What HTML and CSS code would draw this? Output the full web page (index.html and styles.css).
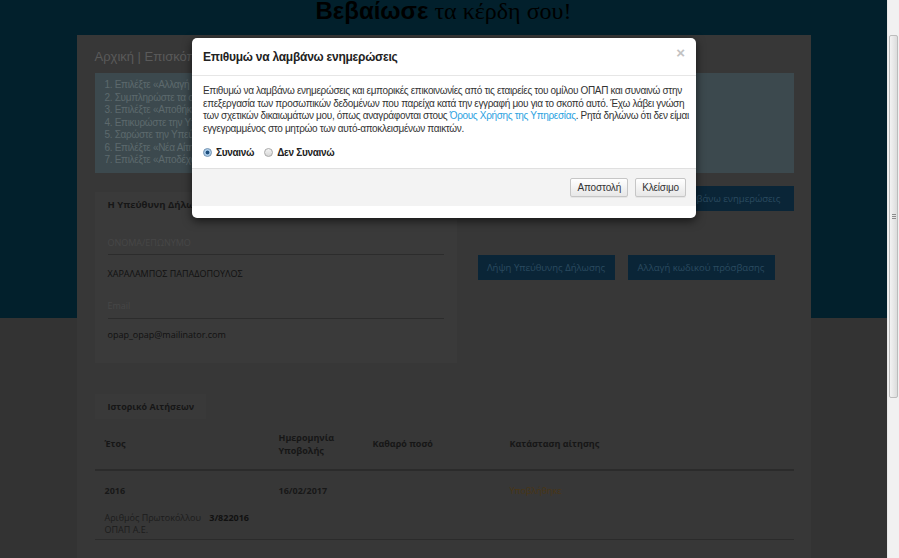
FILE: index.html
```html
<!DOCTYPE html>
<html lang="el">
<head>
<meta charset="utf-8">
<title>Βεβαίωσε τα κέρδη σου!</title>
<link rel="stylesheet" href="styles.css">
</head>
<body>
<div class="window">
  <div class="viewport">
    <h1 class="hero-title"><b>Βεβαίωσε</b> τα κέρδη σου!</h1>
    <div class="panel">
      <div class="crumbs">Αρχική | Επισκόπηση</div>
      <div class="steps">
        <div>1. Επιλέξτε «Αλλαγή στοιχείων»</div>
        <div>2. Συμπληρώστε τα στοιχεία σας</div>
        <div>3. Επιλέξτε «Αποθήκευση»</div>
        <div>4. Επικυρώστε την Υπεύθυνη Δήλωση</div>
        <div>5. Σαρώστε την Υπεύθυνη Δήλωση</div>
        <div>6. Επιλέξτε «Νέα Αίτηση»</div>
        <div>7. Επιλέξτε «Αποδέχομαι»</div>
      </div>
      <div class="info-row">
        <div class="card">
          <div class="card-title">Η Υπεύθυνη Δήλωση</div>
          <div class="field-label">ΟΝΟΜΑ/ΕΠΩΝΥΜΟ</div>
          <div class="field-value">ΧΑΡΑΛΑΜΠΟΣ ΠΑΠΑΔΟΠΟΥΛΟΣ</div>
          <div class="field-label second">Email</div>
          <div class="field-value second">opap_opap@mailinator.com</div>
        </div>
        <div class="actions">
          <div class="actions-top"><span class="btn-dark btn-wide">Επιθυμώ να λαμβάνω ενημερώσεις</span></div>
          <div class="actions-mid">
            <span class="btn-dark btn-a">Λήψη Υπεύθυνης Δήλωσης</span>
            <span class="btn-dark btn-b">Αλλαγή κωδικού πρόσβασης</span>
          </div>
        </div>
      </div>
      <div class="history">
        <div class="tab">Ιστορικό Αιτήσεων</div>
        <div class="table">
          <div class="thead">
            <div>Έτος</div>
            <div>Ημερομηνία<br>Υποβολής</div>
            <div>Καθαρό ποσό</div>
            <div>Κατάσταση αίτησης</div>
          </div>
          <div class="trow">
            <div class="cells">
              <div class="strong">2016</div>
              <div class="strong">16/02/2017</div>
              <div></div>
              <div class="status">Υποβλήθηκε</div>
            </div>
            <div class="proto">Αριθμός Πρωτοκόλλου <b>3/822016</b><br>ΟΠΑΠ Α.Ε.</div>
          </div>
        </div>
      </div>
    </div>

    <div class="modal">
      <div class="modal-header">
        <span class="modal-title">Επιθυμώ να λαμβάνω ενημερώσεις</span>
        <span class="close">×</span>
      </div>
      <div class="modal-body">
        <p class="consent">Επιθυμώ να λαμβάνω ενημερώσεις και εμπορικές επικοινωνίες από τις εταιρείες του ομίλου ΟΠΑΠ και συναινώ στην<br>επεξεργασία των προσωπικών δεδομένων που παρείχα κατά την εγγραφή μου για το σκοπό αυτό. Έχω λάβει γνώση<br>των σχετικών δικαιωμάτων μου, όπως αναγράφονται στους <a class="link" href="#">Όρους Χρήσης της Υπηρεσίας</a>. Ρητά δηλώνω ότι δεν είμαι<br>εγγεγραμμένος στο μητρώο των αυτό-αποκλεισμένων παικτών.</p>
        <div class="choices">
          <label class="choice"><input type="radio" name="c" checked> Συναινώ</label>
          <label class="choice"><input type="radio" name="c"> Δεν Συναινώ</label>
        </div>
      </div>
      <div class="modal-footer">
        <button class="btn-light">Αποστολή</button>
        <button class="btn-light">Κλείσιμο</button>
      </div>
    </div>
  </div>
  <div class="scrollbar"><div class="thumb"><span class="grip"></span></div></div>
</div>
</body>
</html>
```

FILE: styles.css
```css
html, body {
  margin: 0;
  padding: 0;
}
body {
  font-family: "Liberation Sans", Arial, sans-serif;
  overflow: hidden;
  background: #333333;
}
.window {
  display: flex;
  width: 899px;
  height: 558px;
}
.viewport {
  position: relative;
  flex: 1;
  height: 558px;
  overflow: hidden;
  background: linear-gradient(#02202c 0, #02202c 318px, #333333 318px);
}
.hero-title {
  margin: -3px 0 6px;
  height: 32px;
  line-height: 27px;
  text-align: center;
  font-size: 24px;
  font-weight: normal;
  color: #000;
  font-family: "Liberation Serif", serif;
}
.hero-title b {
  font-family: "Liberation Sans", Arial, sans-serif;
  font-weight: bold;
}
.panel {
  width: 734px;
  margin: 0 auto;
  background: #373737;
  padding: 0 17px 40px 18px;
  box-sizing: border-box;
  min-height: 540px;
}
.crumbs {
  height: 38px;
  padding-top: 12px;
  line-height: 20px;
  font-size: 13px;
  color: #5a5a5a;
  box-sizing: border-box;
}
.steps {
  background: #3c494e;
  padding: 6px 10px;
  font-size: 10px;
  letter-spacing: -0.3px;
  line-height: 12.5px;
  color: #5d696d;
}
.info-row {
  display: flex;
  margin-top: 13px;
}
.card {
  width: 362px;
  margin-top: 6px;
  background: #3a3a3a;
  padding: 6px 13px 0;
  font-family: "Open Sans", sans-serif;
  font-size: 9px;
  box-sizing: border-box;
  height: 171px;
}
.card-title {
  font-weight: bold;
  font-size: 9.5px;
  color: #161616;
  line-height: 13px;
  margin-bottom: 25px;
}
.field-label {
  color: #474747;
  line-height: 13px;
  padding-bottom: 5px;
  border-bottom: 1px solid #2c2c2c;
}
.field-value {
  color: #111;
  line-height: 13px;
  margin-top: 12px;
}
.field-label.second {
  margin-top: 19px;
  padding-bottom: 6px;
}
.field-value.second {
  margin-top: 9px;
}
.actions {
  flex: 1;
  display: flex;
  flex-direction: column;
  padding-left: 21px;
}
.actions-top {
  display: flex;
  justify-content: flex-end;
}
.actions-mid {
  display: flex;
  gap: 13px;
  margin-top: 44px;
}
.btn-dark {
  display: inline-flex;
  align-items: center;
  justify-content: center;
  height: 25px;
  background: #0a2537;
  color: #2b4b60;
  font-family: "Open Sans", sans-serif;
  font-size: 9.5px;
}
.btn-wide { width: 182px; }
.btn-a { width: 137px; }
.btn-b { width: 147px; }
.history {
  margin-top: 31px;
  font-family: "Open Sans", sans-serif;
  font-size: 9px;
}
.tab {
  width: 111px;
  height: 25px;
  line-height: 25px;
  background: #393939;
  padding-left: 13px;
  box-sizing: border-box;
  color: #161616;
  font-weight: bold;
}
.thead, .cells {
  display: grid;
  grid-template-columns: 174px 94px 137px 1fr;
}
.thead > div, .cells > div {
  padding-left: 10px;
}
.thead {
  height: 52px;
  box-sizing: border-box;
  align-items: center;
  border-bottom: 2px solid #2b2b2b;
  font-weight: bold;
  color: #161616;
  line-height: 13px;
}
.trow {
  border-bottom: 1px solid #2b2b2b;
  height: 69px;
  box-sizing: border-box;
}
.cells {
  padding-top: 13px;
  line-height: 13px;
}
.strong { font-weight: bold; color: #181818; }
.status { color: #4a3614; }
.proto {
  padding-left: 10px;
  margin-top: 15px;
  color: #1c1c1c;
  line-height: 12px;
}
.proto b { margin-left: 6px; color: #111; }

/* modal */
.modal {
  position: absolute;
  left: 192px;
  top: 38px;
  width: 504px;
  background: #fff;
  border-radius: 5px;
  box-shadow: 0 3px 10px rgba(0, 0, 0, 0.6);
  padding-bottom: 12px;
  overflow: hidden;
}
.modal-header {
  height: 38px;
  border-bottom: 1px solid #e6e6e6;
  display: flex;
  align-items: center;
  justify-content: space-between;
  padding: 0 11px;
  box-sizing: border-box;
}
.modal-title {
  font-size: 12px;
  letter-spacing: -0.25px;
  font-weight: bold;
  color: #222;
}
.close {
  font-size: 15px;
  font-weight: bold;
  color: #c2c2c2;
  margin-top: -9px;
}
.modal-body {
  padding: 9px 11px 10px;
}
.consent {
  margin: 0;
  font-size: 10px;
  letter-spacing: -0.33px;
  line-height: 12.5px;
  color: #333;
  white-space: nowrap;
}
.link {
  color: #2aa2df;
  text-decoration: none;
}
.choices {
  display: flex;
  gap: 10px;
  margin-top: 11px;
  height: 12px;
  align-items: center;
}
.choice {
  display: flex;
  align-items: center;
  gap: 4px;
  font-size: 10px;
  letter-spacing: -0.3px;
  font-weight: bold;
  color: #222;
}
.choice input {
  appearance: none;
  -webkit-appearance: none;
  margin: 0;
  width: 9px;
  height: 9px;
  border-radius: 50%;
  border: 1px solid #a9a9a9;
  background: linear-gradient(#f4f4f4, #d6d6d6);
  box-sizing: border-box;
}
.choice input:checked {
  border-color: #6d8fb0;
  background: radial-gradient(circle, #1e4e7c 0, #1e4e7c 1.6px, #9ec3e4 2.2px, #d6e8f6 100%);
}
.modal-footer {
  border-top: 1px solid #e0e0e0;
  background: #f3f3f3;
  height: 38px;
  box-sizing: border-box;
  display: flex;
  justify-content: flex-end;
  align-items: center;
  gap: 7px;
  padding: 0 10px 1px;
}
.btn-light {
  height: 19px;
  padding: 0 6px;
  font-family: "Liberation Sans", Arial, sans-serif;
  font-size: 10px;
  letter-spacing: -0.15px;
  color: #333;
  border: 1px solid #c6c6c6;
  border-radius: 2px;
  background: linear-gradient(#ffffff, #e7e7e7);
  box-shadow: 0 1px 0 rgba(0,0,0,0.05);
}

/* scrollbar */
.scrollbar {
  width: 12px;
  height: 558px;
  background: #f1f1f1;
  border-left: 1px solid #e8e8e8;
  box-sizing: border-box;
  padding-top: 35px;
  display: flex;
  justify-content: center;
}
.thumb {
  width: 9px;
  height: 363px;
  box-sizing: border-box;
  border: 1px solid #bcbcbc;
  border-radius: 2px;
  background: linear-gradient(to right, #f3f3f3, #dcdcdc);
  display: flex;
  justify-content: center;
  align-items: center;
}
.grip {
  width: 4px;
  height: 5px;
  background: repeating-linear-gradient(#8c8c8c 0, #8c8c8c 1px, transparent 1px, transparent 2px);
}
```
